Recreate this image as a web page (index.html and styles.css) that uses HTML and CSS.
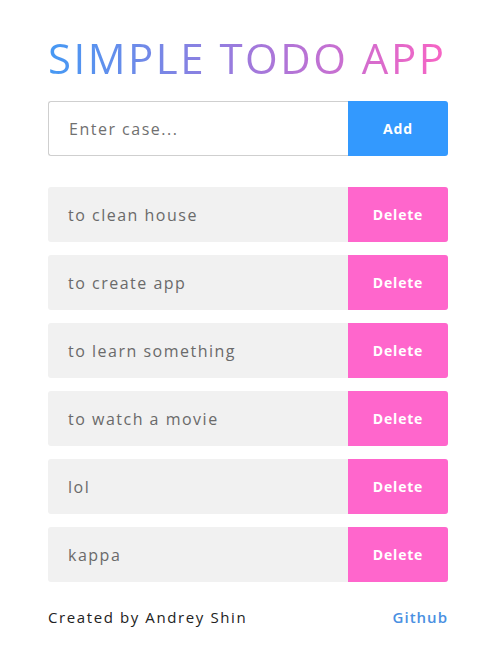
FILE: index.html
```html
<!DOCTYPE html>
<html>
<head>
<meta charset="utf-8">
<link rel="stylesheet" href="styles.css">
</head>
<body>
<div class="app">
  <h1 class="title">SIMPLE TODO APP</h1>
  <form class="add-form">
    <input class="add-input" type="text" placeholder="Enter case...">
    <button class="btn btn-add" type="button">Add</button>
  </form>
  <ul class="list">
    <li class="item"><span class="item-text">to clean house</span><button class="btn btn-del" type="button">Delete</button></li>
    <li class="item"><span class="item-text">to create app</span><button class="btn btn-del" type="button">Delete</button></li>
    <li class="item"><span class="item-text">to learn something</span><button class="btn btn-del" type="button">Delete</button></li>
    <li class="item"><span class="item-text">to watch a movie</span><button class="btn btn-del" type="button">Delete</button></li>
    <li class="item"><span class="item-text">lol</span><button class="btn btn-del" type="button">Delete</button></li>
    <li class="item"><span class="item-text">kappa</span><button class="btn btn-del" type="button">Delete</button></li>
  </ul>
  <footer class="footer">
    <span class="author">Created by Andrey Shin</span>
    <a class="gh" href="#">Github</a>
  </footer>
</div>
</body>
</html>
```

FILE: styles.css
```css
* { box-sizing: border-box; }
html, body { margin: 0; padding: 0; background: #fff; }
body { font-family: "Open Sans", "DejaVu Sans", sans-serif; }
.app { width: 400px; margin: 0 0 0 48px; padding-top: 33px; }
.title {
  margin: 0;
  font-family: "Open Sans", sans-serif;
  font-weight: 400;
  font-size: 42px;
  line-height: 50px;
  letter-spacing: 2.5px;
  background: linear-gradient(90deg, #4599f4 0%, #9f79dc 50%, #f864c4 100%);
  -webkit-background-clip: text;
  background-clip: text;
  color: transparent;
  display: inline-block;
  white-space: nowrap;
}
.add-form { display: flex; height: 55px; margin-top: 18px; }
.add-input {
  flex: 1; min-width: 0;
  border: 1px solid #cfcfcf; border-right: none;
  border-radius: 3px 0 0 3px;
  padding: 0 20px;
  font-family: inherit; font-size: 16px; letter-spacing: 1.5px;
  color: #333; outline: none;
}
.add-input::placeholder { color: #707070; }
.btn {
  width: 100px; border: none; color: #fff;
  font-family: "Open Sans", sans-serif; font-weight: 700; font-size: 14px;
  letter-spacing: 0.8px;
  border-radius: 0 3px 3px 0; cursor: pointer;
}
.btn-add { background: #3399fe; }
.btn-del { background: #ff66cc; }
.list { list-style: none; margin: 31px 0 0; padding: 0; display: flex; flex-direction: column; gap: 13px; }
.item { display: flex; height: 55px; background: #f1f1f1; border-radius: 3px; }
.item-text { flex: 1; display: flex; align-items: center; padding-left: 20px; font-size: 16px; letter-spacing: 1.5px; color: #6a6a6a; }
.footer { display: flex; justify-content: space-between; align-items: center; margin-top: 25px; font-size: 15px; letter-spacing: 1.6px; }
.author { color: #222; }
.gh { color: #4a90e2; text-decoration: none; font-weight: 600; letter-spacing: 1px; }
```
